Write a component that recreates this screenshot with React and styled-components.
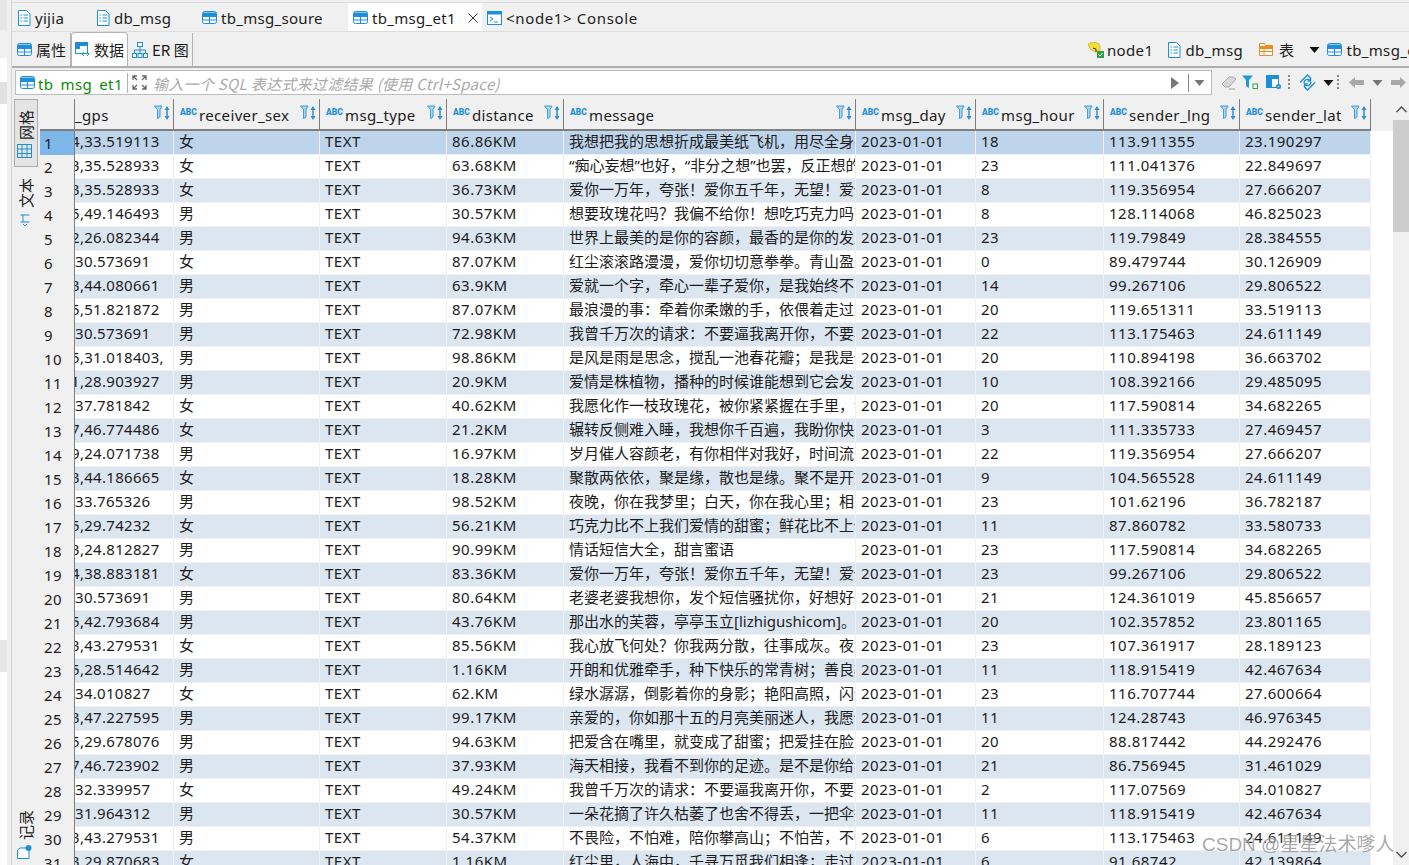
import React from "react";
import styled, { createGlobalStyle } from "styled-components";

const Global = createGlobalStyle`
  html, body { margin: 0; padding: 0; background: #f0f0f0; overflow: hidden; }
  * { box-sizing: border-box; }
`;
const FONT = `"Noto Sans", "Noto Sans CJK SC", sans-serif`;
const CJK = `"Noto Sans CJK SC", "Noto Sans", sans-serif`;
const COLS = "35px 99px 146px 127px 117px 292px 120px 128px 136px 131px 1fr";

const Page = styled.div`
  width: 1409px; height: 865px; overflow: hidden; display: flex; position: relative;
  font-family: ${FONT}; font-size: 15px; color: #1c1c1c; background: #f0f0f0;
`;
const Navigator = styled.div`
  width: 7px; height: 100%; background: #fff; display: flex; flex-direction: column; flex: none;
`;
const NavGap = styled.div`
  height: ${(p) => p.$h}px; background: ${(p) => p.$bg}; flex: none;
`;
const Sash = styled.div`
  width: 5px; flex: none; background: #f0f0f0; border-right: 1px solid #d4d4d4;
`;
const Main = styled.div`
  flex: 1; min-width: 0; display: flex; flex-direction: column;
`;
const TabBar = styled.div`
  height: 30px; margin-top: 2px; flex: none; display: flex; border-top: 1px solid #dcdcdc; border-bottom: 1px solid #dcdcdc;
`;
const Tab = styled.div`
  width: ${(p) => p.$w}px; flex: none; display: flex; align-items: center; gap: 4px; padding: 1px 0 0 5px;
  background: ${(p) => (p.$active ? "#fff" : "transparent")}; letter-spacing: ${(p) => p.$ls || 0.3}px; white-space: nowrap;
`;
const Close = styled.span`
  margin-left: 8px; display: flex;
`;
const Toolbar = styled.div`
  height: 36px; flex: none; display: flex; justify-content: space-between; border-bottom: 2px solid #aeaeae; overflow: hidden;
`;
const SubTabs = styled.div`
  display: flex; align-items: stretch;
`;
const SubTab = styled.div`
  width: ${(p) => p.$w}px; display: flex; align-items: center; gap: ${(p) => p.$gap}px; padding-left: ${(p) => p.$pl}px;
  margin-top: ${(p) => (p.$active ? 0 : 1)}px; font-family: ${CJK}; white-space: nowrap;
  background: ${(p) => (p.$active ? "#fff" : "transparent")};
  border-right: 1px solid #b4b4b4; border-left: ${(p) => (p.$active ? "1px solid #b4b4b4" : "0")};
  border-top: ${(p) => (p.$active ? "1px solid #b4b4b4" : "0")};
  border-radius: ${(p) => (p.$active ? "4px 4px 0 0" : "0")};
`;
const Crumbs = styled.div`
  display: flex; align-items: center; width: 321px; flex: none; overflow: hidden; white-space: nowrap; letter-spacing: 0.35px; padding-top: 1px;
`;
const Crumb = styled.div`
  display: flex; align-items: center; gap: ${(p) => p.$gap || 3}px; flex: none; margin-left: ${(p) => p.$ml}px;
`;
const FilterBar = styled.div`
  height: 31px; flex: none; display: flex; align-items: flex-start; padding: 2px 0 0 3px;
`;
const FilterBox = styled.div`
  width: 1197px; height: 25px; flex: none; display: flex; align-items: center; background: #fff; border: 1px solid #bdbdbd;
`;
const SourceLabel = styled.div`
  width: 112px; height: 20px; flex: none; display: flex; align-items: center; gap: 3px; padding-left: 4px; border-right: 1px solid #b0b0b0;
  color: #0a8a0a; letter-spacing: 0.4px; white-space: nowrap;
`;
const SourceText = styled.span`
  line-height: 20px; position: relative; top: 1px;
`;
const HiddenMark = styled.span`
  color: transparent;
`;
const Expand = styled.span`
  display: flex; margin: 0 6px 0 4px;
`;
const Placeholder = styled.div`
  flex: 1; color: #a9a9a9; font-style: italic; font-family: ${CJK}; white-space: nowrap; font-size: 15px; letter-spacing: 0.3px; padding-top: 1px;
`;
const BoxEnd = styled.div`
  display: flex; align-items: center; height: 21px; flex: none;
`;
const BoxDivider = styled.span`
  width: 1px; height: 18px; background: #888; margin: 0 5px 0 9px;
`;
const FilterTools = styled.div`
  display: flex; align-items: center; height: 25px; padding-left: 8px; gap: 0; flex: none;
`;
const ToolSlot = styled.span`
  display: flex; align-items: center; justify-content: center; width: ${(p) => p.$w}px; flex: none;
`;
const Body = styled.div`
  flex: 1; min-height: 0; display: flex;
`;
const Rail = styled.div`
  width: 28px; flex: none; display: flex; flex-direction: column; align-items: flex-start; padding: 0 0 4px 2px;
`;
const RailButton = styled.div`
  width: 24px; height: ${(p) => p.$h}px; flex: none; display: flex; flex-direction: column; align-items: center; gap: ${(p) => p.$gap}px; padding-top: ${(p) => p.$pt}px;
  margin-top: ${(p) => p.$mt}px; background: ${(p) => (p.$active ? "#e4e4e4" : "transparent")};
  border: 1px solid ${(p) => (p.$active ? "#adadad" : "transparent")};
`;
const RailText = styled.span`
  writing-mode: vertical-rl; text-orientation: sideways; transform: rotate(180deg); font-family: ${CJK}; font-size: 15px; line-height: 20px;
`;
const RailIcon = styled.span`
  display: flex; margin-right: 3px;
`;
const Grid = styled.div`
  flex: 1; min-width: 0; display: flex; flex-direction: column; overflow: hidden;
`;
const HeadRow = styled.div`
  display: grid; grid-template-columns: ${COLS}; height: 32px; flex: none;
`;
const HeadCell = styled.div`
  display: flex; align-items: flex-start; padding-left: ${(p) => (p.$first ? 0 : 6)}px; position: relative; overflow: hidden; white-space: nowrap;
  border-right: ${(p) => (p.$plain ? "0" : "1px solid #7d7d7d")};
  border-bottom: 2px solid ${(p) => (p.$plain ? "transparent" : "#808080")};
  letter-spacing: 0.35px; font-size: 15px;
`;
const Abc = styled.span`
  font: 900 8.5px/10px "Roboto", sans-serif; color: #1c8fd6; letter-spacing: 0; margin-top: 8px; margin-right: 3px; flex: none; width: 16px;
`;
const HeadName = styled.span`
  line-height: 20px; margin-top: 6px;
`;
const HeadIcons = styled.span`
  position: absolute; right: 2px; top: 6px; display: flex;
`;
const DataRow = styled.div`
  display: grid; grid-template-columns: ${COLS}; height: 24px; flex: none;
`;
const RowNum = styled.div`
  padding-left: 4px; line-height: 24px; background: ${(p) => (p.$selected ? "#7eb7ea" : "#f0f0f0")};
  border-right: 1px solid #7d7d7d; border-bottom: 1px solid #858585; letter-spacing: 0.3px; position: relative;
`;
const Cell = styled.div`
  padding-left: ${(p) => (p.$clip ? 0 : 5)}px; line-height: 21px; height: 24px; overflow: hidden; white-space: nowrap;
  border-right: 1px solid #f0f0f0; border-bottom: 1px solid #f0f0f0;
  letter-spacing: ${(p) => (p.$cjk ? 0 : p.$clip ? 0.3 : 0.5)}px;
  background: ${(p) => (p.$selected ? "#bdd4ea" : p.$alt ? "#dce6f1" : "#fff")};
`;
const Filler = styled.div`
  background: #fff; border-bottom: 1px solid #f0f0f0;
`;
const ClipText = styled.span`
  display: block; margin-left: ${(p) => p.$shift}px;
`;
const Scrollbar = styled.div`
  width: 16px; flex: none; display: flex; flex-direction: column; background: #f0f0f0; align-items: center;
`;
const ScrollEnd = styled.div`
  height: 21px; flex: none; display: flex; align-items: center; justify-content: center;
`;
const Thumb = styled.div`
  width: 16px; height: 112px; flex: none; background: #cdcdcd;
`;
const Track = styled.div`
  flex: 1;
`;
const Watermark = styled.div`
  position: absolute; left: 1202px; top: 832px; font-family: "Liberation Sans", ${CJK}; font-size: 19px; line-height: 26px;
  color: rgba(110, 110, 110, 0.6); text-shadow: 0 0 2px rgba(255,255,255,.9); white-space: nowrap;
`;

const BLUE = "#1c8fd6";
const TableIcon = ({ c = BLUE }) => (
  <svg width="15" height="13" viewBox="0 0 15 13">
    <rect x="0.5" y="0.5" width="14" height="12" rx="2" fill="#fff" stroke={c} />
    <path d="M1 1.5h13V6H1z" fill={c} />
    <path d="M1 9h13M7.5 5v8" stroke={c} />
  </svg>
);
const DocIcon = () => (
  <svg width="14" height="16" viewBox="0 0 14 16">
    <path d="M1.500.500h8l3.500 3.500v11.500H1.500z" fill="#fff" stroke={BLUE} />
    <path d="M3.500 5h1.500M6.500 5H11M3.500 8h1.500M6.500 8H11M3.500 11h1.500M6.500 11H11" stroke={BLUE} />
  </svg>
);
const ConsoleIcon = () => (
  <svg width="15" height="14" viewBox="0 0 15 14">
    <rect x="0.5" y="0.5" width="14" height="13" fill="#fff" stroke={BLUE} />
    <path d="M1 1h13v2.500H1z" fill={BLUE} />
    <path d="M3 6l3 2-3 2M7 11h4" fill="none" stroke={BLUE} />
  </svg>
);
const DataIcon = () => (
  <svg width="16" height="15" viewBox="0 0 16 15">
    <rect x="0.5" y="0.500" width="12" height="11" fill="#fff" stroke={BLUE} />
    <path d="M1 1h11v3H1zM1 4h4v3H1z" fill={BLUE} />
    <path d="M9 10l-2 2 2 2M12 10l2 2-2 2" fill="none" stroke={BLUE} />
  </svg>
);
const ErIcon = () => (
  <svg width="16" height="16" viewBox="0 0 16 16" fill="#fff" stroke={BLUE}>
    <rect x="5.500" y="0.500" width="5" height="4" />
    <rect x="0.500" y="11.500" width="4" height="4" />
    <rect x="6" y="11.500" width="4" height="4" />
    <rect x="11.500" y="11.500" width="4" height="4" />
    <path d="M8 5v6M2.500 11V8h11v3" fill="none" />
  </svg>
);
const CloseIcon = () => (
  <svg width="10" height="10" viewBox="0 0 10 10"><path d="M.5.5l9 9M9.500.5l-9 9" stroke="#333" /></svg>
);
const NodeIcon = () => (
  <svg width="16" height="16" viewBox="0 0 16 16">
    <path d="M0 2l4-2 6 1 2 2v7H7L2 7z" fill="#f4dc3c" stroke="#c9a814" strokeWidth=".6" />
    <path d="M5 6l3 1v3" stroke="#333" fill="none" />
    <rect x="9" y="9" width="7" height="7" fill="#2e9e48" />
    <path d="M10.500 12.500l1.500 1.500 2.500-3" stroke="#fff" fill="none" />
  </svg>
);
const FolderIcon = () => (
  <svg width="14" height="13" viewBox="0 0 14 13">
    <path d="M.5 12.500V.5h5l1 2h7v10z" fill="#fff" stroke="#ef8a1c" />
    <path d="M1 3h12v3H1zM1 8h12v1H1z" fill="#ef8a1c" />
    <path d="M5 3v9" stroke="#ef8a1c" />
  </svg>
);
const Caret = ({ c = "#111", w = 11, h = 6 }) => (
  <svg width={w} height={h} viewBox="0 0 10 6"><path d="M0 0h10L5 6z" fill={c} /></svg>
);
const ExpandIcon = () => (
  <svg width="15" height="15" viewBox="0 0 15 15" fill="none" stroke="#666" strokeWidth="1.300">
    <path d="M1 5V1h4M1 1l4 4M10 1h4v4M14 1l-4 4M1 10v4h4M1 14l4-4M14 10v4h-4M14 14l-4-4" />
  </svg>
);
const HeadFilterIcons = () => (
  <svg width="17" height="16" viewBox="0 0 17 16">
    <path d="M.5 1h7.500L6 4.500V12l-2.500 1.500V4.500z" fill="#a9d6f2" stroke="#3f9ed8" strokeLinejoin="round" />
    <path d="M13 2v11" stroke="#2f8fd0" strokeWidth="1.500" />
    <path d="M10.500 5L13 1l2.500 4zM10.500 11L13 15l2.500-4z" fill="#2f8fd0" />
  </svg>
);
const PlayIcon = () => (
  <svg width="8" height="12" viewBox="0 0 8 12"><path d="M0 0l8 6-8 6z" fill="#777" /></svg>
);
const Eraser = () => (
  <svg width="16" height="15" viewBox="0 0 16 15">
    <path d="M1 9l7-7 4 0 3 2-7 8H4z" fill="#d8d8d8" stroke="#aaa" />
    <path d="M8 14h6" stroke="#999" />
  </svg>
);
const FilterOk = () => (
  <svg width="16" height="15" viewBox="0 0 16 15">
    <path d="M0 .500h11L7 5v8L4 11V5z" fill="#1c9ad6" />
    <rect x="11" y="9" width="4.500" height="4.500" fill="#fff" stroke="#2ea043" />
  </svg>
);
const Config = () => (
  <svg width="16" height="15" viewBox="0 0 16 15">
    <rect x=".5" y=".5" width="12" height="12" fill="#fff" stroke={BLUE} />
    <path d="M1 1h11v3H1zM1 4h5v8H1z" fill={BLUE} />
    <circle cx="12.500" cy="11.500" r="2.500" fill={BLUE} />
    <circle cx="12.500" cy="11.500" r=".8" fill="#fff" />
  </svg>
);
const Dots = () => (
  <svg width="3" height="15" viewBox="0 0 3 15"><path d="M1 0v2M1 4v2M1 8v2M1 12v2" stroke="#888" strokeWidth="2" /></svg>
);
const Refresh = () => (
  <svg width="17" height="17" viewBox="0 0 17 17" fill="none" stroke={BLUE} strokeWidth="1.400">
    <path d="M1 8.500L8.500 1 12 4.500M16 8.500L8.500 16 5 12.500" />
    <path d="M5 9a3.500 3.500 0 0 1 6-2.500M12 8a3.500 3.500 0 0 1-6 2.500" />
    <path d="M11.500 4v3h-3M5.500 13v-3h3" />
  </svg>
);
const ArrowLeft = () => (
  <svg width="15" height="11" viewBox="0 0 15 11"><path d="M0 5.500L6 0v3h9v5H6v3z" fill="#a8a8a8" /></svg>
);
const ArrowRight = () => (
  <svg width="15" height="11" viewBox="0 0 15 11"><path d="M15 5.500L9 0v3H0v5h9v3z" fill="#a8a8a8" /></svg>
);
const Chevron = ({ down }) => (
  <svg width="11" height="7" viewBox="0 0 11 7" fill="none" stroke="#555" strokeWidth="1.500">
    <path d={down ? "M.5 1l5 5 5-5" : "M.5 6l5-5 5 5"} />
  </svg>
);
const GridIcon = () => (
  <svg width="15" height="14" viewBox="0 0 15 14" fill="none" stroke={BLUE}>
    <rect x=".5" y=".5" width="14" height="13" />
    <path d="M.5 5h14M.5 9.500h14M5 .5v13M10 .5v13" />
  </svg>
);
const TextIcon = () => (
  <svg width="10" height="13" viewBox="0 0 10 13" fill="none" stroke={BLUE}>
    <path d="M.5 1h9M.5 8h9M3 1v7" />
    <path d="M3 10l2 2 2-2" />
  </svg>
);
const RecordIcon = () => (
  <svg width="15" height="14" viewBox="0 0 15 14">
    <path d="M.5 13.500V5L3 3h9v10.500z" fill="#fff" stroke={BLUE} />
    <circle cx="11.500" cy="3" r="3" fill={BLUE} />
  </svg>
);

const HEADERS = ["_gps", "receiver_sex", "msg_type", "distance", "message", "msg_day", "msg_hour", "sender_lng", "sender_lat"];
const ROWS = [
  ["4,33.519113", "女", "86.86KM", "我想把我的思想折成最美纸飞机，用尽全身的", "18", "113.911355", "23.190297"],
  ["3,35.528933", "女", "63.68KM", "“痴心妄想”也好，“非分之想”也罢，反正想的", "23", "111.041376", "22.849697"],
  ["3,35.528933", "女", "36.73KM", "爱你一万年，夸张！爱你五千年，无望！爱你", "8", "119.356954", "27.666207"],
  ["5,49.146493", "男", "30.57KM", "想要玫瑰花吗？我偏不给你！想吃巧克力吗？", "8", "128.114068", "46.825023"],
  ["2,26.082344", "男", "94.63KM", "世界上最美的是你的容颜，最香的是你的发丝", "23", "119.79849", "28.384555"],
  ["30.573691", "女", "87.07KM", "红尘滚滚路漫漫，爱你切切意拳拳。青山盈盈", "0", "89.479744", "30.126909"],
  ["3,44.080661", "男", "63.9KM", "爱就一个字，牵心一辈子爱你，是我始终不变", "14", "99.267106", "29.806522"],
  ["5,51.821872", "男", "87.07KM", "最浪漫的事：牵着你柔嫩的手，依偎着走过人", "20", "119.651311", "33.519113"],
  ["30.573691", "男", "72.98KM", "我曾千万次的请求：不要逼我离开你，不要再", "22", "113.175463", "24.611149"],
  ["5,31.018403,", "男", "98.86KM", "是风是雨是思念，搅乱一池春花瓣；是我是你", "20", "110.894198", "36.663702"],
  ["1,28.903927", "男", "20.9KM", "爱情是株植物，播种的时候谁能想到它会发芽", "10", "108.392166", "29.485095"],
  ["37.781842", "女", "40.62KM", "我愿化作一枝玫瑰花，被你紧紧握在手里，让", "20", "117.590814", "34.682265"],
  ["7,46.774486", "女", "21.2KM", "辗转反侧难入睡，我想你千百遍，我盼你快来", "3", "111.335733", "27.469457"],
  ["9,24.071738", "男", "16.97KM", "岁月催人容颜老，有你相伴对我好，时间流逝", "22", "119.356954", "27.666207"],
  ["3,44.186665", "女", "18.28KM", "聚散两依依，聚是缘，散也是缘。聚不是开始", "9", "104.565528", "24.611149"],
  ["33.765326", "男", "98.52KM", "夜晚，你在我梦里；白天，你在我心里；相思", "23", "101.62196", "36.782187"],
  ["5,29.74232", "女", "56.21KM", "巧克力比不上我们爱情的甜蜜；鲜花比不上你", "11", "87.860782", "33.580733"],
  ["3,24.812827", "男", "90.99KM", "情话短信大全，甜言蜜语", "23", "117.590814", "34.682265"],
  ["4,38.883181", "女", "83.36KM", "爱你一万年，夸张！爱你五千年，无望！爱你", "23", "99.267106", "29.806522"],
  ["30.573691", "男", "80.64KM", "老婆老婆我想你，发个短信骚扰你，好想好想", "21", "124.361019", "45.856657"],
  ["5,42.793684", "男", "43.76KM", "那出水的芙蓉，亭亭玉立[lizhigushicom]。", "20", "102.357852", "23.801165"],
  ["3,43.279531", "女", "85.56KM", "我心放飞何处？你我两分散，往事成灰。夜深", "23", "107.361917", "28.189123"],
  ["5,28.514642", "男", "1.16KM", "开朗和优雅牵手，种下快乐的常青树；善良相", "11", "118.915419", "42.467634"],
  ["34.010827", "女", "62.KM", "绿水潺潺，倒影着你的身影；艳阳高照，闪烁", "23", "116.707744", "27.600664"],
  ["3,47.227595", "男", "99.17KM", "亲爱的，你如那十五的月亮美丽迷人，我愿做", "11", "124.28743", "46.976345"],
  ["5,29.678076", "男", "94.63KM", "把爱含在嘴里，就变成了甜蜜；把爱挂在脸上", "20", "88.817442", "44.292476"],
  ["7,46.723902", "男", "37.93KM", "海天相接，我看不到你的足迹。是不是你给我", "21", "86.756945", "31.461029"],
  ["32.339957", "女", "49.24KM", "我曾千万次的请求：不要逼我离开你，不要再", "2", "117.07569", "34.010827"],
  ["31.964312", "男", "30.57KM", "一朵花摘了许久枯萎了也舍不得丢，一把伞撑", "11", "118.915419", "42.467634"],
  ["3,43.279531", "男", "54.37KM", "不畏险，不怕难，陪你攀高山；不怕苦，不怕", "6", "113.175463", "24.611149"],
  ["3,29.870683", "女", "1.16KM", "红尘里，人海中，千寻万觅我们相逢；走过四", "6", "91.68742", "42.139864"],
];

export default function App() {
  return (
    <Page>
      <Global />
      <Navigator>
        <NavGap $h={30} $bg="#e6e6e6" />
        <NavGap $h={28} $bg="#f0f0f0" />
        <NavGap $h={24} $bg="#fff" />
        <NavGap $h={22} $bg="#e2e2e2" />
        <NavGap $h={536} $bg="#fff" />
        <NavGap $h={32} $bg="#e6e6e6" />
      </Navigator>
      <Sash />
      <Main>
        <TabBar>
          <Tab $w={79}><DocIcon /><span>yijia</span></Tab>
          <Tab $w={106}><DocIcon /><span>db_msg</span></Tab>
          <Tab $w={151}><TableIcon /><span>tb_msg_soure</span></Tab>
          <Tab $w={134} $active><TableIcon /><span>tb_msg_et1</span><Close><CloseIcon /></Close></Tab>
          <Tab $w={170} $ls={0.65}><ConsoleIcon /><span>&lt;node1&gt; Console</span></Tab>
        </TabBar>
        <Toolbar>
          <SubTabs>
            <SubTab $w={59} $pl={5} $gap={4}><TableIcon /><span>属性</span></SubTab>
            <SubTab $w={57} $pl={3} $gap={3} $active><DataIcon /><span>数据</span></SubTab>
            <SubTab $w={65} $pl={4} $gap={4}><ErIcon /><span>ER 图</span></SubTab>
          </SubTabs>
          <Crumbs>
            <Crumb $ml={0}><NodeIcon /><span>node1</span></Crumb>
            <Crumb $ml={14} $gap={4}><DocIcon /><span>db_msg</span></Crumb>
            <Crumb $ml={16} $gap={6}><FolderIcon /><span>表</span></Crumb>
            <Crumb $ml={15}><Caret /></Crumb>
            <Crumb $ml={7} $gap={4}><TableIcon /><span>tb_msg_et1</span></Crumb>
          </Crumbs>
        </Toolbar>
        <FilterBar>
          <FilterBox>
            <SourceLabel>
              <TableIcon />
              <SourceText>tb<HiddenMark>_</HiddenMark>msg<HiddenMark>_</HiddenMark>et1</SourceText>
            </SourceLabel>
            <Expand><ExpandIcon /></Expand>
            <Placeholder>输入一个 SQL 表达式来过滤结果 (使用 Ctrl+Space)</Placeholder>
            <BoxEnd>
              <PlayIcon />
              <BoxDivider />
              <Caret c="#777" w={11} h={6} />
              <ToolSlot $w={6} />
            </BoxEnd>
          </FilterBox>
          <FilterTools>
            <ToolSlot $w={18}><Eraser /></ToolSlot>
            <ToolSlot $w={24}><FilterOk /></ToolSlot>
            <ToolSlot $w={24}><Config /></ToolSlot>
            <ToolSlot $w={7}><Dots /></ToolSlot>
            <ToolSlot $w={28}><Refresh /></ToolSlot>
            <ToolSlot $w={14}><Caret /></ToolSlot>
            <ToolSlot $w={6}><Dots /></ToolSlot>
            <ToolSlot $w={30}><ArrowLeft /></ToolSlot>
            <ToolSlot $w={12}><Caret c="#777" /></ToolSlot>
            <ToolSlot $w={30}><ArrowRight /></ToolSlot>
          </FilterTools>
        </FilterBar>
        <Body>
          <Rail>
            <RailButton $h={68} $mt={0} $pt={10} $gap={4} $active><RailText>网格</RailText><RailIcon><GridIcon /></RailIcon></RailButton>
            <RailButton $h={60} $mt={6} $pt={4} $gap={6}><RailText>文本</RailText><RailIcon><TextIcon /></RailIcon></RailButton>
            <RailButton $h={60} $mt={572} $pt={4} $gap={5}><RailText>记录</RailText><RailIcon><RecordIcon /></RailIcon></RailButton>
          </Rail>
          <Grid>
            <HeadRow>
              <HeadCell />
              {HEADERS.map((h, i) => (
                <HeadCell key={h} $first={i === 0}>
                  {i > 0 && <Abc>ABC</Abc>}
                  <HeadName>{h}</HeadName>
                  <HeadIcons><HeadFilterIcons /></HeadIcons>
                </HeadCell>
              ))}
              <HeadCell $plain />
            </HeadRow>
            {ROWS.map((r, i) => {
              const sel = i === 0;
              const alt = i % 2 === 0;
              const shift = r[0].includes(",") ? -4 : 0;
              return (
                <DataRow key={i}>
                  <RowNum $selected={sel}>{i + 1}</RowNum>
                  <Cell $selected={sel} $alt={alt} $clip><ClipText $shift={shift}>{r[0]}</ClipText></Cell>
                  <Cell $selected={sel} $alt={alt} $cjk>{r[1]}</Cell>
                  <Cell $selected={sel} $alt={alt}>TEXT</Cell>
                  <Cell $selected={sel} $alt={alt}>{r[2]}</Cell>
                  <Cell $selected={sel} $alt={alt} $cjk>{r[3]}</Cell>
                  <Cell $selected={sel} $alt={alt}>2023-01-01</Cell>
                  <Cell $selected={sel} $alt={alt}>{r[4]}</Cell>
                  <Cell $selected={sel} $alt={alt}>{r[5]}</Cell>
                  <Cell $selected={sel} $alt={alt}>{r[6]}</Cell>
                  <Filler />
                </DataRow>
              );
            })}
          </Grid>
          <Scrollbar>
            <ScrollEnd><Chevron /></ScrollEnd>
            <Thumb />
            <Track />
            <ScrollEnd><Chevron down /></ScrollEnd>
          </Scrollbar>
        </Body>
      </Main>
      <Watermark>CSDN @星星法术嗲人</Watermark>
    </Page>
  );
}
